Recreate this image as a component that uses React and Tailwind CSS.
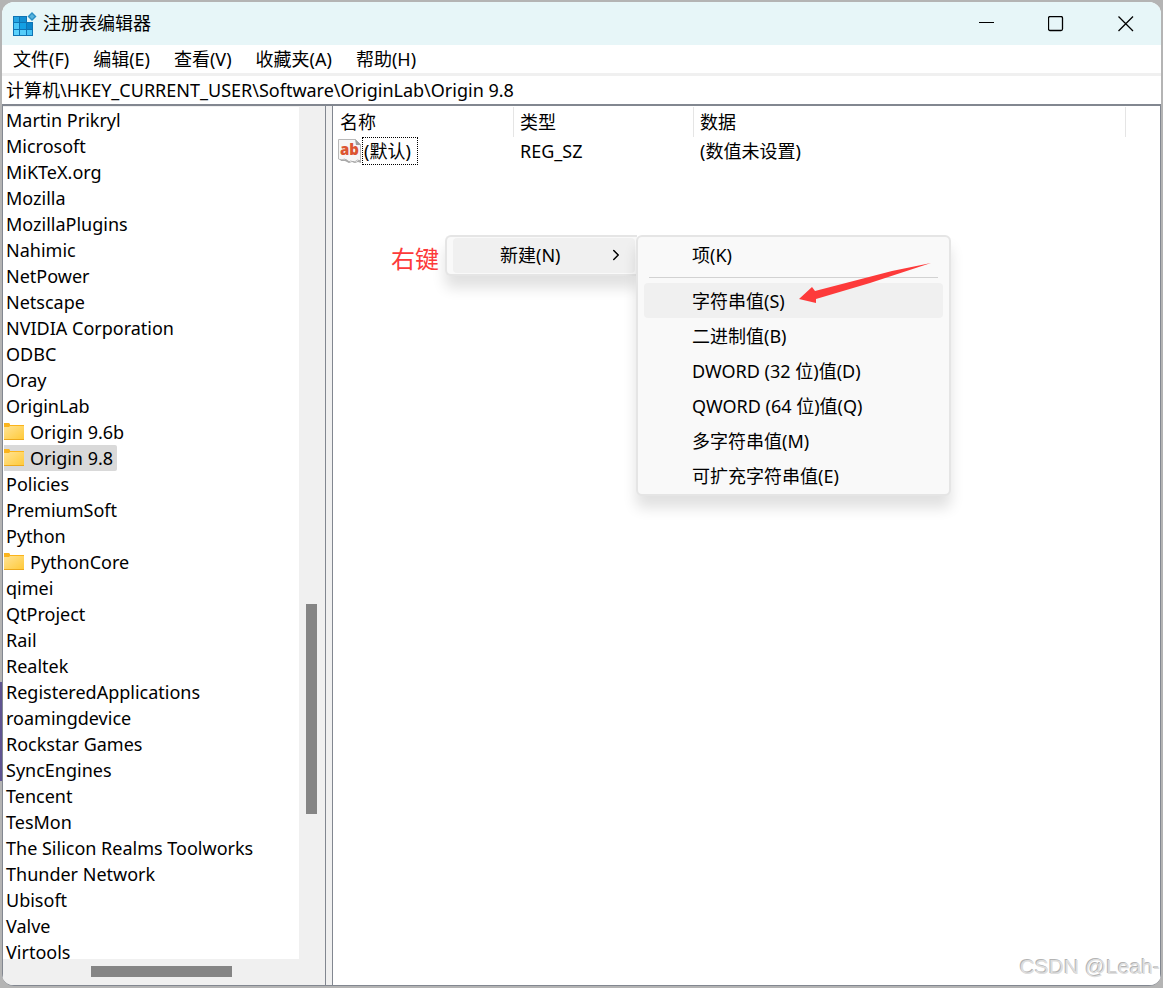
import { ChevronRight } from "lucide-react";

const MENUS = ["文件(F)", "编辑(E)", "查看(V)", "收藏夹(A)", "帮助(H)"];

const TREE = [
  { name: "Martin Prikryl" },
  { name: "Microsoft" },
  { name: "MiKTeX.org" },
  { name: "Mozilla" },
  { name: "MozillaPlugins" },
  { name: "Nahimic" },
  { name: "NetPower" },
  { name: "Netscape" },
  { name: "NVIDIA Corporation" },
  { name: "ODBC" },
  { name: "Oray" },
  { name: "OriginLab" },
  { name: "Origin 9.6b", folder: true },
  { name: "Origin 9.8", folder: true, selected: true },
  { name: "Policies" },
  { name: "PremiumSoft" },
  { name: "Python" },
  { name: "PythonCore", folder: true },
  { name: "qimei" },
  { name: "QtProject" },
  { name: "Rail" },
  { name: "Realtek" },
  { name: "RegisteredApplications" },
  { name: "roamingdevice" },
  { name: "Rockstar Games" },
  { name: "SyncEngines" },
  { name: "Tencent" },
  { name: "TesMon" },
  { name: "The Silicon Realms Toolworks" },
  { name: "Thunder Network" },
  { name: "Ubisoft" },
  { name: "Valve" },
  { name: "Virtools" },
];

const NEW_ITEMS = [
  { label: "字符串值(S)", active: true },
  { label: "二进制值(B)" },
  { label: "DWORD (32 位)值(D)" },
  { label: "QWORD (64 位)值(Q)" },
  { label: "多字符串值(M)" },
  { label: "可扩充字符串值(E)" },
];

const RegeditIcon = () => (
  <svg width="24" height="24" viewBox="0 0 24 24" aria-hidden="true">
    <path d="M0 4h14v6h6v14H0z" fill="#0f74b4" />
    <rect x="1" y="5" width="5" height="5" fill="#27a5e2" />
    <rect x="7" y="5" width="6" height="5" fill="#1490d3" />
    <rect x="1" y="11" width="5" height="6" fill="#4cc6f7" />
    <rect x="7" y="11" width="6" height="6" fill="#149fe3" />
    <rect x="14" y="11" width="5" height="6" fill="#0b86cc" />
    <rect x="1" y="18" width="5" height="5" fill="#5bd2fc" />
    <rect x="7" y="18" width="6" height="5" fill="#55cdfa" />
    <rect x="14" y="18" width="5" height="5" fill="#45c2f5" />
    <path d="M19 0l4.500 4.500-4.500 4.500-4.500-4.500z" fill="#2b8fc4" />
    <path d="M19 2l2.500 2.500-2.500 2.500-2.500-2.500z" fill="#58b4dd" />
  </svg>
);

const FolderIcon = () => (
  <svg width="20" height="18" viewBox="0 0 20 18" className="shrink-0" aria-hidden="true">
    <defs>
      <linearGradient id="folder" x1="0" y1="0" x2="1" y2="1">
        <stop offset="0" stopColor="#ffe394" />
        <stop offset="1" stopColor="#ffc937" />
      </linearGradient>
    </defs>
    <path d="M0 0h5l1 1v1h14v3H0z" fill="#fbb41c" />
    <path d="M0 4h5l1-1h14v14H0z" fill="url(#folder)" />
    <path d="M0 16h20v1H0z" fill="#eda91c" />
  </svg>
);

const StringValueIcon = () => (
  <svg width="24" height="24" viewBox="0 0 24 24" className="shrink-0" aria-hidden="true">
    <path d="M0.500 0.500h17l5 5v16.500l-3-1-3 2-4-1-2 1-4-3-3 1-3-1z" fill="#f6f6f6" stroke="#b9b9b9" />
    <path d="M2 20l3 1 3-1 4 3 3-1 3 1 3-2 2 1v2l-3-1-3 1-3-1-3 1-4-2-4 0z" fill="#a9a9a9" />
    <path d="M17 0l6 6h-5z" fill="#9f9f9f" />
    <text x="2" y="16" fontSize="15" fontWeight="800" fill="#dc5532" fontFamily="Open Sans, sans-serif">
      ab
    </text>
  </svg>
);

const TitleBar = () => (
  <header className="h-[43px] shrink-0 bg-[#e7f6f8] flex items-center pl-[11px]">
    <RegeditIcon />
    <h1 className="flex-1 pl-1.5 pb-0.5">注册表编辑器</h1>
    <button aria-label="最小化" className="w-[70px] h-full flex items-center justify-center">
      <svg width="15" height="15" viewBox="0 0 15 15">
        <path d="M0 6.500h15" stroke="#000" />
      </svg>
    </button>
    <button aria-label="最大化" className="w-[70px] h-full flex items-center justify-center">
      <svg width="16" height="16" viewBox="0 0 16 16">
        <rect x="0.500" y="0.500" width="14" height="14" rx="1.500" fill="none" stroke="#000" strokeWidth="1.300" />
      </svg>
    </button>
    <button aria-label="关闭" className="w-[70px] h-full flex items-center justify-center">
      <svg width="16" height="16" viewBox="0 0 16 16">
        <path d="M0.500 0.500l14.500 14.500M15 0.500l-14.500 14.500" stroke="#000" strokeWidth="1.300" />
      </svg>
    </button>
  </header>
);

const TreePane = () => (
  <nav aria-label="注册表项" className="w-[324px] shrink-0 flex flex-col border-x border-[#828790] bg-[#f0f0f0] pt-px">
    <div className="flex flex-1 min-h-0">
      <ul className="flex-1 min-w-0 bg-white overflow-hidden pl-px">
        {TREE.map((item) => (
          <li key={item.name} className="h-[26px] flex">
            <a
              href="#"
              className={`flex items-center leading-[26px] whitespace-nowrap ${
                item.folder ? "gap-1.5 pr-1" : "pl-0.5"
              } ${item.selected ? "bg-[#d9d9d9] rounded-r-xs" : ""}`}
            >
              {item.folder && <FolderIcon />}
              {item.name}
            </a>
          </li>
        ))}
      </ul>
      <div className="w-[26px] flex flex-col pl-[7px]">
        <div className="grow-[497]" />
        <div className="w-[11px] grow-[210] bg-[#858585]" />
        <div className="grow-[145]" />
      </div>
    </div>
    <div className="h-[26px] flex items-start pt-[7px]">
      <div className="grow-[88]" />
      <div className="h-[11px] grow-[141] bg-[#858585]" />
      <div className="grow-[93]" />
    </div>
  </nav>
);

const ValueTable = () => (
  <table className="w-full table-fixed border-separate border-spacing-0 text-left">
    <colgroup>
      <col className="w-[181px]" />
      <col className="w-[180px]" />
      <col className="w-[432px]" />
      <col />
    </colgroup>
    <thead>
      <tr className="h-[30px]">
        <th className="font-normal p-0 pl-[7px] border-r border-[#e5e5e5]">名称</th>
        <th className="font-normal p-0 pl-1.5 border-r border-[#e5e5e5]">类型</th>
        <th className="font-normal p-0 pl-1.5 border-r border-[#e5e5e5]">数据</th>
        <td />
      </tr>
    </thead>
    <tbody>
      <tr className="h-7">
        <td className="p-0 pl-[5px]">
          <div className="flex items-center">
            <StringValueIcon />
            <span className="h-7 px-px pr-1.5 border border-dotted border-black">(默认)</span>
          </div>
        </td>
        <td className="p-0 pl-1.5">REG_SZ</td>
        <td className="p-0 pl-1.5">(数值未设置)</td>
        <td />
      </tr>
    </tbody>
  </table>
);

const ContextMenu = () => (
  <div className="absolute left-[58px] top-[129px] flex items-start">
    <p className="w-[54px] pt-1 text-2xl leading-10 text-[#fd3a3a]">右键</p>
    <div className="w-[192px] h-[41px] border-2 border-r-0 border-[#e5e5e5] rounded-l-md bg-[#f9f9f9] p-px pl-1.5 shadow-[0_12px_14px_rgba(0,0,0,0.12)]">
      <button className="w-[182px] h-[35px] rounded bg-[#f0f0f0] flex items-center justify-between pl-[47px] pr-2.5 pb-0.5">
        新建(N)
        <ChevronRight size={18} strokeWidth={2} />
      </button>
    </div>
    <div className="relative -ml-px w-[315px] border-2 border-[#e5e5e5] rounded-md bg-[#f9f9f9] px-1.5 pb-px shadow-[0_12px_14px_rgba(0,0,0,0.12)]">
      <button className="block w-full h-[35px] text-left pl-12">项(K)</button>
      <hr className="mx-[5px] my-[5px] border-[#d2d2d2]" />
      {NEW_ITEMS.map((item) => (
        <button
          key={item.label}
          className={`block w-[299px] h-[35px] rounded text-left pl-12 ${item.active ? "bg-[#f0f0f0]" : ""}`}
        >
          {item.label}
        </button>
      ))}
      {/* arrow pointing at the string value item */}
      <svg width="134" height="42" viewBox="0 0 134 42" className="absolute left-[160px] top-[26px]" aria-hidden="true">
        <path d="M133 0L94 8L17 28L14 24L1 36L18 40L18 36L72 20Z" fill="#fd3a3a" />
      </svg>
    </div>
  </div>
);

export default function App() {
  return (
    <div className="relative h-screen bg-[#b4b4b4] p-0.5 text-[18px] leading-[26px] text-black font-['Noto_Sans','Noto_Sans_CJK_SC',sans-serif]">
      {/* another window showing behind the left edge */}
      <div className="absolute left-0 top-[69%] w-0.5 h-[10%] bg-[#5f5490]" />
      <div className="h-full flex flex-col rounded-xl overflow-hidden bg-white border-b border-[#828790]">
        <TitleBar />
        <div role="menubar" className="h-7 shrink-0 flex items-center gap-6 pl-[11px]">
          {MENUS.map((menu) => (
            <button key={menu} role="menuitem">
              {menu}
            </button>
          ))}
        </div>
        <input
          aria-label="地址"
          className="h-[33px] shrink-0 w-full border-t-3 border-b-2 border-t-[#f0f0f0] border-b-[#828790] px-1 pb-0.5 outline-none"
          defaultValue="计算机\HKEY_CURRENT_USER\Software\OriginLab\Origin 9.8"
        />
        <main className="flex flex-1 min-h-0 bg-[#f0f0f0]">
          <TreePane />
          <section className="relative flex-1 min-w-0 ml-1.5 border-x border-[#828790] bg-white pt-px">
            <ValueTable />
            <ContextMenu />
            <p className="absolute right-0 bottom-1 text-[21px] leading-7 text-[#dedede] [text-shadow:-1px_-1px_0_#b4b4b4] font-['Liberation_Sans',sans-serif]">
              CSDN @Leah-
            </p>
          </section>
        </main>
      </div>
    </div>
  );
}
